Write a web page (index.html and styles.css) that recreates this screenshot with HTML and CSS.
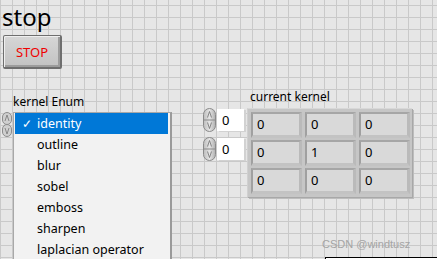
FILE: index.html
```html
<!DOCTYPE html>
<html lang="en">
<head>
  <meta charset="UTF-8">
  <title>stop</title>
  <link rel="stylesheet" href="styles.css">
</head>
<body>

  <div class="page">
    <div class="title">stop</div>
    <button class="stop-btn">STOP</button>

    <div class="lower">
      <div class="enum">
        <div class="label enum-label">kernel Enum</div>
        <div class="enum-body">
          <svg class="ring-spin" width="10" height="25" viewBox="0 0 10 25">
            <rect x="0.5" y="0.5" width="9" height="12" rx="4.5" fill="#cfcfcf" stroke="#8c8c8c"/>
            <rect x="0.5" y="12.5" width="9" height="12" rx="4.5" fill="#cfcfcf" stroke="#8c8c8c"/>
            <path d="M3 9 L5 3 L7 9" fill="none" stroke="#777" stroke-width="0.8"/>
            <path d="M3 16 L5 22 L7 16" fill="none" stroke="#777" stroke-width="0.8"/>
          </svg>
          <ul class="menu">
            <li class="item selected"><span class="check">✓</span>identity</li>
            <li class="item"><span class="check"></span>outline</li>
            <li class="item"><span class="check"></span>blur</li>
            <li class="item"><span class="check"></span>sobel</li>
            <li class="item"><span class="check"></span>emboss</li>
            <li class="item"><span class="check"></span>sharpen</li>
            <li class="item"><span class="check"></span>laplacian operator</li>
          </ul>
        </div>
      </div>

      <div class="nums">
        <div class="num">
          <svg class="spin" width="13" height="24" viewBox="0 0 13 24">
            <defs>
              <linearGradient id="sg" x1="0" x2="1" y1="0" y2="0">
                <stop offset="0" stop-color="#bdbdbd"/>
                <stop offset="0.5" stop-color="#e4e4e4"/>
                <stop offset="1" stop-color="#b0b0b0"/>
              </linearGradient>
            </defs>
            <rect x="0.5" y="0.5" width="12" height="23" rx="6" fill="url(#sg)" stroke="#8a8a8a"/>
            <line x1="1" y1="12" x2="12" y2="12" stroke="#8a8a8a"/>
            <path d="M4.5 9.5 L6.5 3.5 L8.5 9.5" fill="none" stroke="#707070" stroke-width="0.8"/>
            <path d="M4.5 14.5 L6.5 20.5 L8.5 14.5" fill="none" stroke="#707070" stroke-width="0.8"/>
          </svg>
          <div class="num-box">0</div>
        </div>
        <div class="num">
          <svg class="spin" width="13" height="24" viewBox="0 0 13 24">
            <rect x="0.5" y="0.5" width="12" height="23" rx="6" fill="url(#sg)" stroke="#8a8a8a"/>
            <line x1="1" y1="12" x2="12" y2="12" stroke="#8a8a8a"/>
            <path d="M4.5 9.5 L6.5 3.5 L8.5 9.5" fill="none" stroke="#707070" stroke-width="0.8"/>
            <path d="M4.5 14.5 L6.5 20.5 L8.5 14.5" fill="none" stroke="#707070" stroke-width="0.8"/>
          </svg>
          <div class="num-box">0</div>
        </div>
      </div>

      <div class="kernel">
        <div class="label kernel-label">current kernel</div>
        <div class="matrix">
          <div class="cell">0</div>
          <div class="cell">0</div>
          <div class="cell">0</div>
          <div class="cell">0</div>
          <div class="cell">1</div>
          <div class="cell">0</div>
          <div class="cell">0</div>
          <div class="cell">0</div>
          <div class="cell">0</div>
        </div>
      </div>
    </div>
  </div>

  <div class="corner-box"></div>
  <div class="watermark">CSDN @windtusz</div>

</body>
</html>
```

FILE: styles.css
```css
* {
  box-sizing: border-box;
}

body {
  margin: 0;
  width: 437px;
  height: 259px;
  overflow: hidden;
  position: relative;
  font-family: "Noto Sans", sans-serif;
  color: #000;
  background-color: #e6e6e6;
  background-image:
    linear-gradient(to right, #c9c9c9 1px, transparent 1px),
    linear-gradient(to bottom, #c9c9c9 1px, transparent 1px);
  background-size: 12px 12px;
  background-position: 0 5px;
}

.title {
  margin: 3px 0 0 2px;
  font-size: 24px;
  line-height: 28px;
}

.stop-btn {
  display: block;
  margin: 4px 0 0 3px;
  width: 59px;
  height: 34px;
  padding: 0;
  font-family: "Noto Sans", sans-serif;
  font-size: 13px;
  color: #f00000;
  border: 1px solid #6e6e6e;
  border-right-width: 2px;
  border-bottom-width: 2px;
  border-radius: 2px;
  background: linear-gradient(#d6d6d6, #c2c2c2);
  box-shadow: inset 1px 1px 0 #efefef, inset -2px -2px 0 #9c9c9c;
}

.lower {
  display: flex;
  align-items: flex-start;
  margin-top: 21px;
}

.label {
  font-size: 12px;
  line-height: 14px;
}

.enum {
  width: 172px;
  padding-top: 5px;
}

.enum-label {
  margin-left: 13px;
}

.enum-body {
  display: flex;
  align-items: flex-start;
  margin-top: 3px;
}

.ring-spin {
  margin-left: 2px;
  flex: none;
}

.menu {
  list-style: none;
  margin: 0 0 0 1px;
  padding: 0 2px 0 1px;
  width: 159px;
  height: 147px;
  overflow: hidden;
  background: #f2f2f2;
  border: 1px solid #a8a8a8;
  border-right: 2px solid #9a9a9a;
  border-bottom: none;
}

.item {
  display: flex;
  align-items: center;
  height: 21px;
  font-size: 12.5px;
  color: #000;
}

.item.selected {
  background: #0078d7;
  color: #fff;
}

.check {
  width: 22px;
  padding-left: 7px;
  font-size: 12px;
}

.nums {
  display: flex;
  flex-direction: column;
  gap: 5px;
  margin-left: 31px;
  padding-top: 18px;
}

.num {
  display: flex;
  align-items: center;
}

.num-box {
  width: 27px;
  height: 22px;
  margin-left: 1px;
  padding-left: 5px;
  background: #fff;
  font-size: 13px;
  line-height: 22px;
  box-shadow: 2px 1px 0 #d2d2d2;
}

.kernel {
  margin-left: 3px;
}

.kernel-label {
  padding-left: 3px;
}

.matrix {
  display: grid;
  grid-template-columns: repeat(3, 51px);
  grid-auto-rows: 26px;
  gap: 2px 3px;
  margin-top: 4px;
  padding: 3px;
  width: 165px;
  background: #c6c6c6;
  border-top: 1px solid #d8d8d8;
  border-left: 1px solid #d0d0d0;
  box-shadow: 1px 1px 0 #a8a8a8, 2px 2px 0 #bdbdbd;
}

.cell {
  padding-left: 4px;
  font-size: 13px;
  line-height: 21px;
  background: #d9d9d9;
  border-top: 2px solid #a6a6a6;
  border-left: 2px solid #a0a0a0;
  border-right: 3px solid #bababa;
  border-bottom: 3px solid #c3c3c3;
}

.corner-box {
  position: absolute;
  left: 325px;
  top: 257px;
  width: 112px;
  height: 2px;
  background: #fff;
  border-top: 1px solid #000;
  border-left: 1px solid #000;
}

.watermark {
  position: absolute;
  left: 322px;
  top: 238px;
  font-family: "Liberation Sans", sans-serif;
  font-size: 11px;
  color: #a4a4a4;
}
```
